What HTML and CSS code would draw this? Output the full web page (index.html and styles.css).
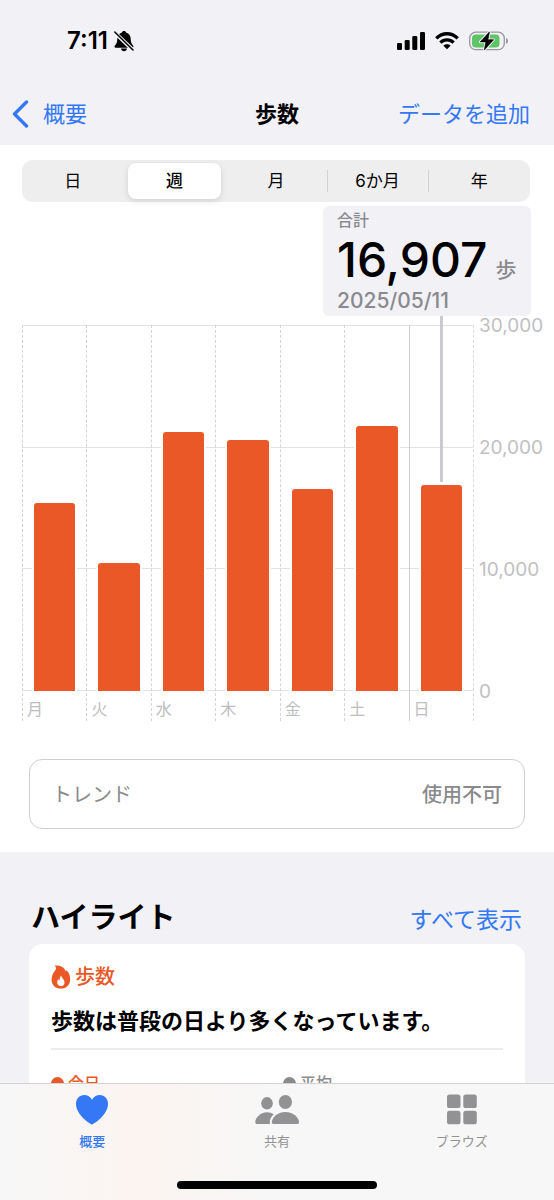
FILE: index.html
```html
<!DOCTYPE html>
<html lang="ja">
<head>
<meta charset="utf-8">
<meta name="viewport" content="width=device-width, initial-scale=1">
<title>歩数</title>
<link rel="stylesheet" href="styles.css">
</head>
<body>
<div class="app">
  <header class="header">
    <div class="status">
      <div class="status-left">
        <span class="clock">7:11</span>
        <svg class="bell" width="20" height="22" viewBox="0 0 20 22" aria-hidden="true">
          <path d="M10 1c-1.200 0-1.900.7-2 1.500C4.800 3.400 3.400 5.800 3.300 9c-.1 3.500-.9 4.800-2.300 6.400-.9 1-.5 2.300.7 2.300h16.600c1.200 0 1.600-1.300.7-2.300-1.400-1.600-2.200-2.900-2.300-6.400-.1-3.200-1.500-5.600-4.700-6.500C11.900 1.700 11.200 1 10 1zM7 18.600c.3 1.700 1.500 2.700 3 2.700s2.700-1 3-2.700z"/>
          <path d="M-.5 1.500 19.500 20.500" stroke="#f1f1f6" stroke-width="3.800"/>
          <path d="M.8 2 19 20" stroke="#000" stroke-width="1.500" stroke-linecap="round"/>
        </svg>
      </div>
      <div class="status-right">
        <svg width="28" height="18" viewBox="0 0 28 18" aria-hidden="true">
          <rect x="0" y="11" width="5" height="7" rx="1.300"/><rect x="7.700" y="8" width="5" height="10" rx="1.300"/><rect x="15.300" y="4" width="5" height="14" rx="1.300"/><rect x="23" y="0" width="5" height="18" rx="1.300"/>
        </svg>
        <svg width="24" height="18" viewBox="0 0 24 18" aria-hidden="true">
          <g fill="none" stroke="#000" stroke-width="3.300"><path d="M1.300 6.400C7.300.2 16.700.2 22.700 6.400"/><path d="M5.400 10.700c3.700-3.700 9.500-3.700 13.200 0"/></g>
          <path d="M12 17.300 8.400 13.700c2-1.800 5.200-1.800 7.200 0z"/>
        </svg>
        <svg width="39" height="20" viewBox="0 0 39 20" aria-hidden="true">
          <rect x=".7" y="1.200" width="34.600" height="17.400" rx="6" fill="none" stroke="#98989c" stroke-width="1.300"/>
          <path d="M37 7c1.300.4 2 1.500 2 2.900s-.7 2.500-2 2.900z" fill="#98989c"/>
          <rect x="3" y="3.500" width="27.500" height="13" rx="3.800" fill="#5ec466"/>
          <path d="M20.500.8 11.200 10.900h5.600L15.300 19l9.300-10.300h-5.700z" stroke="#f1f1f6" stroke-width="2.600" stroke-linejoin="round"/>
          <path d="M20.500.8 11.200 10.900h5.600L15.300 19l9.300-10.300h-5.700z" stroke="#000" stroke-width=".6" stroke-linejoin="round"/>
        </svg>
      </div>
    </div>
    <nav class="nav">
      <a class="back" href="#summary">
        <svg width="17" height="28" viewBox="0 0 17 28" aria-hidden="true"><path d="M14.500 2 2.500 14l12 12" fill="none" stroke="currentColor" stroke-width="3.400" stroke-linecap="round" stroke-linejoin="round"/></svg>
        <span>概要</span>
      </a>
      <h1 class="title">歩数</h1>
      <button class="add" type="button">データを追加</button>
    </nav>
  </header>

  <main class="content">
    <section class="panel">
      <div class="segments" role="group" aria-label="期間">
        <button class="segment" type="button" aria-pressed="false">日</button>
        <button class="segment selected" type="button" aria-pressed="true">週</button>
        <button class="segment" type="button" aria-pressed="false">月</button>
        <button class="segment divided" type="button" aria-pressed="false">6か月</button>
        <button class="segment divided" type="button" aria-pressed="false">年</button>
      </div>

      <div class="callout">
        <div class="callout-label">合計</div>
        <div class="callout-value"><span class="number">16,907</span><span class="unit">歩</span></div>
        <div class="callout-date">2025/05/11</div>
      </div>

      <div class="chart">
        <div class="plot">
          <div class="gridlines"><i></i><i></i><i></i><i></i></div>
          <div class="days">
            <div class="day"><div class="track"><div class="bar" style="height:51.3%"></div></div><span class="day-name">月</span></div>
            <div class="day"><div class="track"><div class="bar" style="height:35%"></div></div><span class="day-name">火</span></div>
            <div class="day"><div class="track"><div class="bar" style="height:70.800%"></div></div><span class="day-name">水</span></div>
            <div class="day"><div class="track"><div class="bar" style="height:68.500%"></div></div><span class="day-name">木</span></div>
            <div class="day"><div class="track"><div class="bar" style="height:55.100%"></div></div><span class="day-name">金</span></div>
            <div class="day"><div class="track"><div class="bar" style="height:72.400%"></div></div><span class="day-name">土</span></div>
            <div class="day week-start"><div class="track"><div class="pointer" style="bottom:57%"></div><div class="bar" style="height:56.300%"></div></div><span class="day-name">日</span></div>
          </div>
        </div>
        <div class="axis"><span>30,000</span><span>20,000</span><span>10,000</span><span>0</span></div>
      </div>

      <div class="trend"><span>トレンド</span><span class="trend-state">使用不可</span></div>
    </section>

    <section class="highlights">
      <div class="highlights-head">
        <h2 class="heading">ハイライト</h2>
        <a class="show-all" href="#all">すべて表示</a>
      </div>
      <article class="card">
        <div class="card-kind">
          <svg width="20" height="24" viewBox="0 0 20 24" aria-hidden="true">
            <path d="M3.400.5C9.500-.1 13.600 2.300 14.600 6.300c.4-.2.700-.6.900-1.100 2.300 2.300 3.700 5.400 3.700 9 0 5.600-3.800 9.400-9.400 9.400S.6 19.900.6 14.700c0-3.600 1.300-6.200 2.800-8.200.9-1.200 1.500-1.800 1.600-2.800C5.100 2.500 4.500 1.300 3.400.5z" fill="#e95826"/>
            <path d="M10.200 10.500c.2 2.200 3.300 3.900 3.300 6.900 0 2.300-1.500 3.700-3.600 3.700s-3.700-1.500-3.700-3.600c0-1.400.5-2.500 1.400-3.500.1.800.4 1.300.9 1.500.2-1.800.5-3.600 1.700-5z" fill="#fff"/>
          </svg>
          <span>歩数</span>
        </div>
        <p class="card-text">歩数は普段の日より多くなっています。</p>
        <div class="compare">
          <span class="today"><i class="dot"></i>今日</span>
          <span class="average"><i class="dot"></i>平均</span>
        </div>
      </article>
    </section>
  </main>

  <footer class="tabbar">
    <nav class="tabs">
      <a class="tab active" href="#summary" aria-current="page">
        <svg width="34" height="31" viewBox="0 0 34 31" aria-hidden="true"><path d="M17 30.500C15.800 30.500 1 21 1 10 1 4.700 4.500 1 9.200 1c3.400 0 6.200 1.800 7.800 4.800C18.600 2.800 21.400 1 24.800 1 29.500 1 33 4.700 33 10c0 11-14.800 20.500-16 20.500z" fill="currentColor"/></svg>
        <span>概要</span>
      </a>
      <a class="tab" href="#sharing">
        <svg width="44" height="31" viewBox="0 0 44 31" aria-hidden="true" fill="currentColor">
          <ellipse cx="12" cy="9.300" rx="5.800" ry="6.200"/><ellipse cx="30.400" cy="8" rx="6.600" ry="7.100"/>
          <path d="M2.200 30C.8 30 .3 29.400.3 28.200.3 24 5 18.300 12 18.300c2.700 0 5 .8 6.800 2-2.500 2.200-4 5-4 7.900 0 .7.100 1.300.4 1.800z"/>
          <path d="M19 30c-1.600 0-2.200-.6-2.200-1.800 0-4.300 5.200-10.300 13.600-10.300S44 23.900 44 28.200c0 1.200-.6 1.800-2.200 1.800z"/>
        </svg>
        <span>共有</span>
      </a>
      <a class="tab" href="#browse">
        <svg width="30" height="31" viewBox="0 0 30 31" aria-hidden="true" fill="currentColor"><rect x="0" y=".5" width="13.500" height="13.500" rx="2.600"/><rect x="16.300" y=".5" width="13.500" height="13.500" rx="2.600"/><rect x="0" y="16.800" width="13.500" height="13.500" rx="2.600"/><rect x="16.300" y="16.800" width="13.500" height="13.500" rx="2.600"/></svg>
        <span>ブラウズ</span>
      </a>
    </nav>
    <div class="home-indicator"></div>
  </footer>
</div>
</body>
</html>
```
FILE: styles.css
```css
* { box-sizing: border-box; }

body {
  margin: 0;
  background: #f1f1f6;
  color: #000;
  font-family: Inter, "Noto Sans CJK JP", sans-serif;
}

a { color: inherit; text-decoration: none; }
button { padding: 0; border: 0; background: none; color: inherit; font: inherit; }
svg { display: block; flex: none; }
h1, h2, p { margin: 0; }

.app { display: flex; flex-direction: column; height: 100vh; }

/* Status bar and navigation */
.header { flex: none; }
.status {
  display: flex;
  justify-content: space-between;
  align-items: center;
  height: 82px;
  padding: 0 46px 0 67px;
}
.status-left { display: flex; align-items: center; gap: 6px; }
.status-right { display: flex; align-items: center; gap: 10px; }
.clock { font-size: 24px; line-height: 28px; font-weight: 600; }

.nav {
  display: grid;
  grid-template-columns: 1fr auto 1fr;
  align-items: center;
  height: 63px;
  padding: 0 24px 0 12px;
  font-size: 22px;
  line-height: 32px;
}
.back { display: flex; align-items: center; gap: 14px; color: #3478f6; }
.title { font-size: 22px; line-height: 32px; font-weight: 700; padding-left: 12px; }
.add { justify-self: end; color: #3478f6; }

.content {
  flex: 1;
  min-height: 0;
  overflow-y: auto;
  scrollbar-width: none;
}

/* Chart panel */
.panel {
  display: flex;
  flex-direction: column;
  padding: 15px 0 23px 22px;
  background: #fff;
}
.segments {
  display: grid;
  grid-template-columns: repeat(5, 1fr);
  height: 42px;
  margin-right: 24px;
  padding: 3px 0;
  border-radius: 11px;
  background: #eee;
}
.segment {
  display: flex;
  align-items: center;
  justify-content: center;
  font-size: 17px;
  line-height: 24px;
}
.segment.selected {
  margin: 0 4px;
  border-radius: 8px;
  background: #fff;
  box-shadow: 0 2px 6px rgba(0, 0, 0, .12);
  font-weight: 500;
}
.segment.divided {
  background: linear-gradient(#d2d2d4, #d2d2d4) left center / 1px 22px no-repeat;
}

.callout {
  align-self: flex-end;
  width: 208px;
  margin: 4px 23px 9px 0;
  padding: 3px 14px;
  border-radius: 6px;
  background: #f1f1f6;
  color: #8a8a8e;
}
.callout-label { font-size: 16px; line-height: 22px; font-weight: 500; }
.callout-value { display: flex; align-items: baseline; gap: 8px; line-height: 58px; white-space: nowrap; }
.number { color: #000; font-size: 48px; font-weight: 500; }
.unit { font-size: 21px; line-height: 24px; font-weight: 500; }
.callout-date { font-size: 21px; line-height: 24px; font-weight: 500; }

.chart { display: flex; }
.plot { display: grid; flex: 1; border-right: 1px dashed #dcdcde; }
.gridlines, .days { grid-area: 1 / 1; }
.gridlines {
  display: flex;
  flex-direction: column;
  justify-content: space-between;
  height: 366px;
}
.gridlines i { height: 1px; background: #e2e2e4; }
.days { display: grid; grid-template-columns: repeat(7, 1fr); }
.day { border-left: 1px dashed #d4d4d6; }
.day.week-start { border-left: 1px solid #d0d0d2; }
.track {
  position: relative;
  display: flex;
  align-items: flex-end;
  height: 366px;
  padding: 0 11px;
}
.bar {
  flex: 1;
  border-radius: 3px 3px 0 0;
  background: #e95826;
  box-shadow: 2px 0 #fff, -2px 0 #fff;
}
.pointer {
  position: absolute;
  top: -9px;
  left: 50%;
  width: 3px;
  margin-left: -1px;
  background: #cacace;
}
.day-name {
  display: block;
  padding: 6px 0 0 4px;
  color: #bdbdbf;
  font-size: 16px;
  line-height: 24px;
}
.axis {
  display: flex;
  flex-direction: column;
  justify-content: space-between;
  width: 80px;
  height: 386px;
  margin-top: -9px;
  padding-left: 5px;
  color: #c0c0c2;
  font-size: 19px;
  line-height: 20px;
}

.trend {
  display: flex;
  align-items: center;
  justify-content: space-between;
  height: 70px;
  margin: 38px 29px 0 7px;
  padding: 2px 22px 0;
  border: 1px solid #cfcfd1;
  border-radius: 13px;
  color: #8a8a8c;
  font-size: 20px;
  line-height: 28px;
}
.trend-state { font-weight: 500; }

/* Highlights */
.highlights { padding: 46px 29px 20px; }
.highlights-head {
  display: flex;
  align-items: baseline;
  justify-content: space-between;
  padding: 0 3px 6px 2px;
}
.heading { font-size: 29px; line-height: 40px; font-weight: 700; }
.show-all { color: #3478f6; font-size: 23px; line-height: 32px; }
.card { padding: 19px 22px; border-radius: 14px; background: #fff; }
.card-kind {
  display: flex;
  align-items: center;
  gap: 4px;
  color: #e95826;
  font-size: 20px;
  line-height: 28px;
  font-weight: 500;
}
.card-text {
  padding: 14px 0 11px;
  border-bottom: 2px solid #ececee;
  font-size: 22px;
  line-height: 32px;
  font-weight: 600;
}
.compare {
  display: grid;
  grid-template-columns: 1fr 1fr;
  gap: 12px;
  padding-top: 21px;
  font-size: 16px;
  line-height: 24px;
  font-weight: 500;
}
.today, .average { display: flex; align-items: center; gap: 4px; }
.today { color: #e95826; }
.average { color: #8a8a8c; }
.dot { width: 13px; height: 13px; border-radius: 50%; background: currentColor; }

/* Tab bar */
.tabbar {
  flex: none;
  display: flex;
  flex-direction: column;
  align-items: center;
  padding-bottom: 11px;
  border-top: 1px solid #d2d2d4;
  background: linear-gradient(90deg, #f7f7f7, #fbf4f1 25%, #f9f5f3 35%, #f7f7f7 50%);
}
.tabs { display: grid; grid-template-columns: repeat(3, 1fr); align-self: stretch; }
.tab {
  display: flex;
  flex-direction: column;
  align-items: center;
  gap: 6px;
  padding: 10px 0 30px;
  color: #929294;
  font-size: 13px;
  line-height: 20px;
}
.tab.active { color: #3478f6; font-weight: 500; }
.home-indicator { width: 36%; height: 8px; border-radius: 4px; background: #000; }
```
